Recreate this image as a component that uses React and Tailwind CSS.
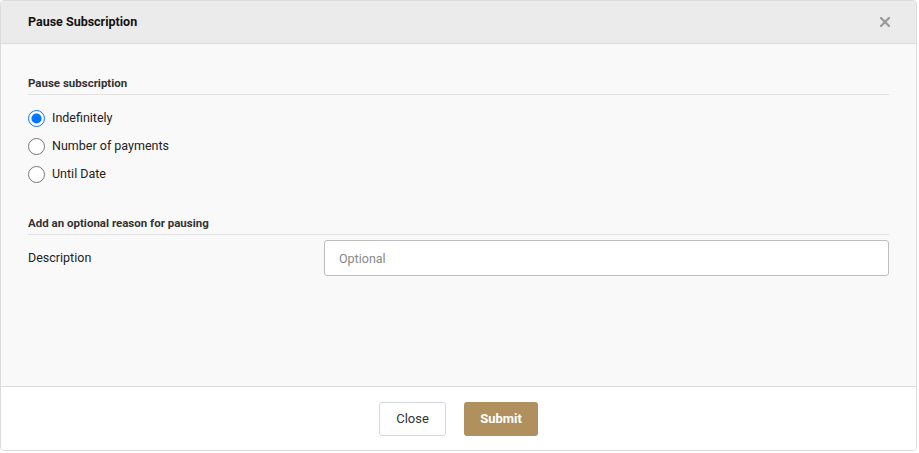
import { useState } from 'react';

const options = ['Indefinitely', 'Number of payments', 'Until Date'];

function SectionHeading({ children, className = '' }) {
  return (
    <div className={`border-b border-[#e2e2e2] pb-[3px] text-[11.5px] leading-[16px] font-bold text-[#333] ${className}`}>
      {children}
    </div>
  );
}

export default function App() {
  const [mode, setMode] = useState('Indefinitely');
  const [reason, setReason] = useState('');

  return (
    <div className="w-[919px] h-[453px] bg-white font-['Roboto',sans-serif]">
      <div className="w-[917px] h-[451px] flex flex-col border border-[#dcdcdc] rounded-[4px] overflow-hidden">
        {/* header */}
        <div className="h-[43px] shrink-0 flex items-center justify-between pl-[27px] pr-[24px] bg-[#ebebeb] border-b border-[#dcdcdc]">
          <h2 className="text-[12.5px] font-bold text-[#111]">Pause Subscription</h2>
          <button className="w-[14px] h-[14px] flex items-center justify-center text-[#999]">
            <svg width="10" height="10" viewBox="0 0 10 10" stroke="currentColor" strokeWidth="2.2" strokeLinecap="square">
              <path d="M1 1L9 9M9 1L1 9" />
            </svg>
          </button>
        </div>

        {/* body */}
        <div className="flex-1 bg-[#f9f9f9] pt-[31px] pl-[27px] pr-[27px]">
          <SectionHeading>Pause subscription</SectionHeading>
          <div className="mt-[9px] flex flex-col">
            {options.map((opt) => (
              <label key={opt} className="h-[28px] flex items-center gap-[7px] text-[12.5px] text-[#222] cursor-pointer">
                <input
                  type="radio"
                  name="pause-mode"
                  checked={mode === opt}
                  onChange={() => setMode(opt)}
                  className="w-[17px] h-[17px] m-0"
                />
                {opt}
              </label>
            ))}
          </div>

          <SectionHeading className="mt-[27px]">Add an optional reason for pausing</SectionHeading>
          <div className="mt-[5px] flex items-center">
            <span className="w-[296px] text-[12.5px] text-[#222]">Description</span>
            <input
              value={reason}
              onChange={(e) => setReason(e.target.value)}
              placeholder="Optional"
              className="flex-1 h-[36px] rounded-[3px] border border-[#bdbdbd] bg-white px-[14px] text-[12.5px] text-[#222] placeholder:text-[#888] outline-none"
            />
          </div>
        </div>

        {/* footer */}
        <div className="h-[64px] shrink-0 flex items-center justify-center gap-[18px] bg-white border-t border-[#dcdcdc]">
          <button className="h-[34px] w-[67px] rounded-[3px] border border-[#d5d8e2] bg-white text-[13px] text-[#333]">
            Close
          </button>
          <button className="h-[34px] w-[74px] rounded-[3px] bg-[#b0915e] text-[13px] font-bold text-white">
            Submit
          </button>
        </div>
      </div>
    </div>
  );
}
